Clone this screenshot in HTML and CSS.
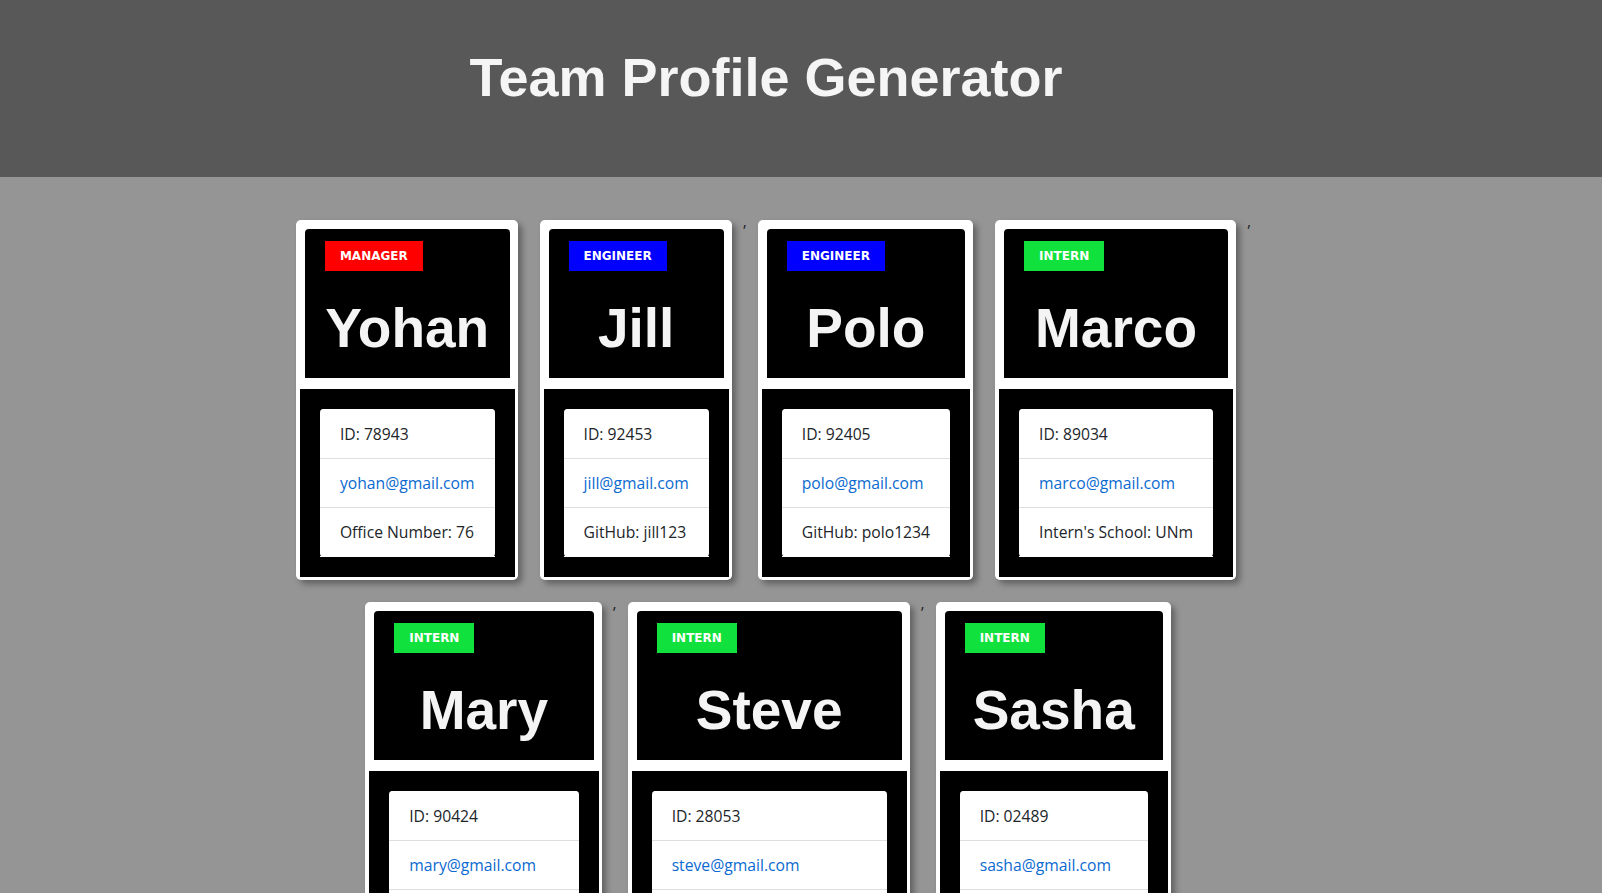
FILE: index.html
```html
<!DOCTYPE html>
<html lang="en">
<head>
<meta charset="UTF-8">
<title>Team Profile Generator</title>
<link rel="stylesheet" href="styles.css">
</head>
<body>
<header class="top">
  <h1 class="top-title">Team Profile Generator</h1>
</header>
<main class="page">
  <div class="team"><div class="card">
      <div class="card-head">
        <div class="role role-manager">MANAGER</div>
        <h2 class="name">Yohan</h2>
      </div>
      <div class="card-body">
        <ul class="info">
          <li class="info-item">ID: 78943</li>
          <li class="info-item"><a class="info-link" href="#">yohan@gmail.com</a></li>
          <li class="info-item">Office Number: 76</li>
        </ul>
      </div>
    </div><div class="card">
      <div class="card-head">
        <div class="role role-engineer">ENGINEER</div>
        <h2 class="name">Jill</h2>
      </div>
      <div class="card-body">
        <ul class="info">
          <li class="info-item">ID: 92453</li>
          <li class="info-item"><a class="info-link" href="#">jill@gmail.com</a></li>
          <li class="info-item">GitHub: <a class="info-link plain" href="#">jill123</a></li>
        </ul>
      </div>
    </div>,<div class="card">
      <div class="card-head">
        <div class="role role-engineer">ENGINEER</div>
        <h2 class="name">Polo</h2>
      </div>
      <div class="card-body">
        <ul class="info">
          <li class="info-item">ID: 92405</li>
          <li class="info-item"><a class="info-link" href="#">polo@gmail.com</a></li>
          <li class="info-item">GitHub: <a class="info-link plain" href="#">polo1234</a></li>
        </ul>
      </div>
    </div><div class="card">
      <div class="card-head">
        <div class="role role-intern">INTERN</div>
        <h2 class="name">Marco</h2>
      </div>
      <div class="card-body">
        <ul class="info">
          <li class="info-item">ID: 89034</li>
          <li class="info-item"><a class="info-link" href="#">marco@gmail.com</a></li>
          <li class="info-item">Intern's School: UNm</li>
        </ul>
      </div>
    </div>,<div class="card">
      <div class="card-head">
        <div class="role role-intern">INTERN</div>
        <h2 class="name">Mary</h2>
      </div>
      <div class="card-body">
        <ul class="info">
          <li class="info-item">ID: 90424</li>
          <li class="info-item"><a class="info-link" href="#">mary@gmail.com</a></li>
          <li class="info-item">Intern's School: UNC</li>
        </ul>
      </div>
    </div>,<div class="card">
      <div class="card-head">
        <div class="role role-intern">INTERN</div>
        <h2 class="name">Steve</h2>
      </div>
      <div class="card-body">
        <ul class="info">
          <li class="info-item">ID: 28053</li>
          <li class="info-item"><a class="info-link" href="#">steve@gmail.com</a></li>
          <li class="info-item">Intern's School: Stanford U</li>
        </ul>
      </div>
    </div>,<div class="card">
      <div class="card-head">
        <div class="role role-intern">INTERN</div>
        <h2 class="name">Sasha</h2>
      </div>
      <div class="card-body">
        <ul class="info">
          <li class="info-item">ID: 02489</li>
          <li class="info-item"><a class="info-link" href="#">sasha@gmail.com</a></li>
          <li class="info-item">Intern's School: UNT</li>
        </ul>
      </div>
    </div></div>
</main>
</body>
</html>
```

FILE: styles.css
```css
* {
  box-sizing: border-box;
}

html,
body {
  margin: 0;
  padding: 0;
}

body {
  background: #959595;
  color: #212529;
  font-family: "Open Sans", "Noto Sans", Arial, sans-serif;
  font-size: 15.7px;
  line-height: 24px;
  min-height: 893px;
}

.top {
  background: #585858;
  height: 177px;
  padding: 45px 70px 0 0;
  text-align: center;
}

.top-title {
  margin: 0;
  font-family: "Liberation Sans", Arial, sans-serif;
  font-weight: 700;
  font-size: 54px;
  line-height: 1.2;
  color: #f5f5f5;
}

.page {
  padding: 32px 66px 0 0;
}

.team {
  max-width: 1110px;
  margin: 0 auto;
  display: flex;
  flex-wrap: wrap;
  justify-content: center;
  align-items: flex-start;
}

.card {
  background: #ffffff;
  border-radius: 5px;
  margin: 11px;
  padding: 0 3px 3px 4px;
  box-shadow: 4px 4px 6px rgba(0, 0, 0, 0.35);
  display: flex;
  flex-direction: column;
}

.card-head {
  background: #000000;
  margin: 9px 5px 11px 5px;
  border-radius: 4px 4px 0 0;
  padding: 12px 20px;
}

.role {
  display: inline-block;
  height: 30px;
  line-height: 30px;
  padding: 0 15px;
  font-family: "DejaVu Sans", Verdana, sans-serif;
  font-weight: 700;
  font-size: 12px;
  color: #ffffff;
}

.role-manager {
  background: #ff0000;
}

.role-engineer {
  background: #0000ff;
}

.role-intern {
  background: #11e13c;
}

.name {
  margin: 24px 0 5px;
  font-family: "Liberation Sans", Arial, sans-serif;
  font-weight: 700;
  font-size: 55px;
  line-height: 1.2;
  color: #f4f4f4;
  text-align: center;
  white-space: nowrap;
}

.card-body {
  background: #000000;
  padding: 20px;
}

.info {
  list-style: none;
  margin: 0;
  padding: 0;
  background: #ffffff;
  border-radius: 4px;
}

.info-item {
  padding: 12px 20px;
  white-space: nowrap;
  border-top: 1px solid #dfdfdf;
}

.info-item:first-child {
  border-top: 1px solid #ffffff;
  border-radius: 4px 4px 0 0;
}

.info-item:last-child {
  border-bottom: 1px solid #ffffff;
}

.info-link {
  color: #0a6ad0;
  text-decoration: none;
}

.info-link.plain {
  color: #212529;
}
```
